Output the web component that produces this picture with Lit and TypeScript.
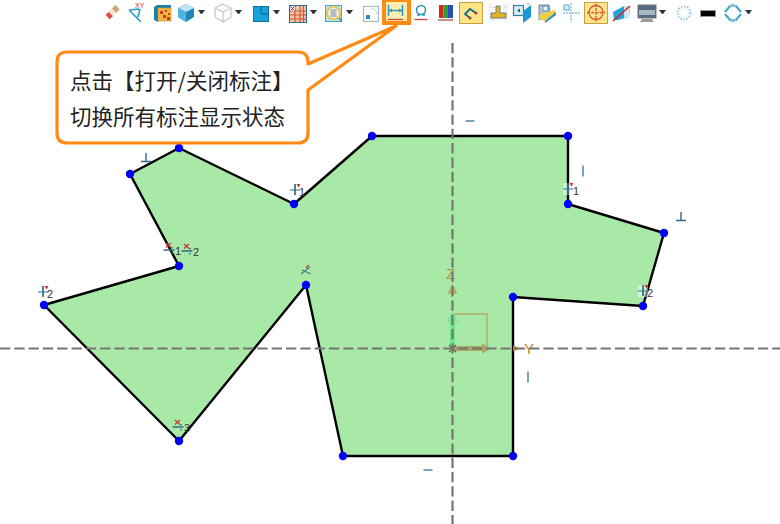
import { LitElement, html, css, svg } from "lit";
import { customElement } from "lit/decorators.js";

type Tool = { ml: number; arrow?: boolean; mode?: "on" | "focus"; icon: unknown };

const tools: Tool[] = [
  { ml: 0, icon: svg`<g transform="rotate(-45 11 11.500)"><rect x="4" y="8" width="4.500" height="6" fill="#dc4f4a"/><rect x="8.500" y="8" width="4.500" height="6" fill="#f6e6c8"/><rect x="13" y="8" width="5" height="6" fill="#c9a77e"/></g>` },
  { ml: 2, icon: svg`<path d="M3 9 15 21M3 9l10-1M14 8l-2 8" fill="none" stroke="#2e9cc8" stroke-width="1.700"/><text x="9" y="7" font-size="7" font-family="Liberation Sans" fill="#c0392b">XY</text>` },
  { ml: 4, icon: svg`<path d="M2 6l3-2h14v3H6v14l-4-2z" fill="#1f7fa8"/><rect x="6" y="7" width="13" height="13" fill="#f4b642" stroke="#c98a3a" stroke-width=".6"/><path d="M8 10h3v3H8zM13 9h2v2h-2zM16 12h2v2h-2zM11 14h3v3h-3zM15 16h3v3h-3z" fill="#d5342b"/>` },
  { ml: 1, arrow: true, icon: svg`<path d="M11 3l8 4v9l-8 5-8-5V7z" fill="#1d88b8"/><path d="M11 3l8 4-8 4-8-4z" fill="#bfe5f3"/><path d="M3 7l8 4v10l-8-5z" fill="#4fb4de"/>` },
  { ml: 7, arrow: true, icon: svg`<path d="M11 3l8 4v9l-8 5-8-5V7zM3 7l8 4 8-4M11 11v10" fill="#fff" stroke="#bcc9d1" stroke-width="1.200"/>` },
  { ml: 8, arrow: true, icon: svg`<rect x="3.500" y="5.500" width="15" height="15" fill="#17a2dc" stroke="#13739c"/><path d="M11 5.500v7.500h7.500" fill="none" stroke="#0c5f85"/>` },
  { ml: 7, arrow: true, icon: svg`<rect x="2.500" y="4.500" width="17" height="17" fill="#f3c4a5" stroke="#2f6f8f"/><path d="M8 5v16M13 5v16M16.500 5v16M3 10h16M3 14h16M3 18h16" stroke="#d2553c" stroke-width="1.200"/><rect x="3" y="5" width="5" height="5" fill="#e9e4ee"/><path d="M3.500 5.500l4 4M7.500 5.500l-4 4" stroke="#c0392b"/>` },
  { ml: 6, arrow: true, icon: svg`<rect x="2.500" y="4.500" width="16" height="16" fill="#bfe3f2" stroke="#4aa5cc"/><circle cx="10.500" cy="12" r="6.500" fill="#eef0ee" stroke="#e0c95a" stroke-width="2.200"/><rect x="7.500" y="8" width="6" height="8" fill="#b6bcc2"/><path d="M16 17l3 3" stroke="#3a7fa0" stroke-width="1.500"/>` },
  { ml: 7, icon: svg`<rect x="3.500" y="5.500" width="15" height="15" fill="#fff" stroke="#aab8c2" stroke-width="1.200"/><path d="M11 8q5-1 6 5" fill="none" stroke="#7cc3e0" stroke-dasharray="1.500 1"/><rect x="6" y="14" width="4" height="4" fill="#2a8fbe"/>` },
  { ml: 3, mode: "focus", icon: svg`<path d="M3.500 4v11M17.500 4v11M4 9.500h13" fill="none" stroke="#2d97bd" stroke-width="1.500"/><path d="M4 9.500l3-2v4zM17 9.500l-3-2v4z" fill="#2d97bd"/><path d="M3 18.500h15" stroke="#c7433c" stroke-width="1.300"/>` },
  { ml: 3, icon: svg`<circle cx="11" cy="9" r="4.500" fill="none" stroke="#2d8fb5" stroke-width="1.500"/><path d="M7 14h3M12 14h3" stroke="#2d8fb5" stroke-width="1.500"/><path d="M4.500 18.500h13" stroke="#c7433c" stroke-width="1.300"/>` },
  { ml: 3, icon: svg`<rect x="4" y="4" width="4.500" height="13" fill="#d9261c"/><rect x="8.500" y="4" width="4.500" height="13" fill="#2aa12f"/><rect x="13" y="4" width="5" height="13" fill="#2a4fb5"/><path d="M3 19h15" stroke="#b56a66" stroke-width="1.500"/>` },
  { ml: 3, mode: "on", icon: svg`<path d="M16 12l-6-4-5 5 5 4" fill="none" stroke="#0f6f8f" stroke-width="1.800"/><circle cx="16" cy="12" r="1.500" fill="#c0392b"/><circle cx="10" cy="17" r="1.500" fill="#c0392b"/>` },
  { ml: 5, icon: svg`<path d="M3 3v18M6 3v18M17 3v18M20 3v18M2 6h18M2 18h18" stroke="#c7c7c7" stroke-dasharray="1 1.500"/><path d="M9 5h4v7h6v5H4v-5h5z" fill="#e6b422" stroke="#3d6c8a" stroke-width=".8"/>` },
  { ml: 2, icon: svg`<rect x="2.500" y="4.500" width="10" height="10" fill="#d9edf6" stroke="#2d7ea6" stroke-width="1.200"/><path d="M6 9.500l3-2v4z" fill="#3a5a72"/><path d="M12 10l8-6v12l-8 6z" fill="#1b9ad2"/><path d="M16 3h3" stroke="#e8b48a" stroke-width="1.500"/>` },
  { ml: 3, icon: svg`<path d="M3 4h10l1 8-11 7z" fill="#b7c4cc" stroke="#55707f" stroke-width=".8"/><rect x="7" y="5" width="5" height="5" fill="#e6f2f8" stroke="#3a86ac" stroke-width=".8"/><path d="M3 14l15-5 2 2-11 9-6-2z" fill="#f0cf3e"/><path d="M9 20l11-9v3l-11 8z" fill="#1f90c4"/>` },
  { ml: 3, icon: svg`<rect x="3" y="4" width="5" height="5" fill="#d9edf6" stroke="#62a9c9"/><path d="M10 2v19M2 12h18" stroke="#8cc3dc" stroke-width="1.400" stroke-dasharray="2 1"/>` },
  { ml: 2, mode: "on", icon: svg`<circle cx="11" cy="11.500" r="7" fill="none" stroke="#d9543f" stroke-width="1.300"/><path d="M11 2.500v18M2 11.500h18" stroke="#d9543f" stroke-width="1.300" stroke-dasharray="3 1.200"/>` },
  { ml: 3, icon: svg`<path d="M3 11l11-6h6l-1 11-11 3H4z" fill="#25a3d6"/><path d="M14 5h6l-1 11-5 1z" fill="#c9ebf6"/><path d="M3 20L20 5" stroke="#e01f26" stroke-width="1.500"/>` },
  { ml: 4, arrow: true, icon: svg`<rect x="2" y="4" width="18" height="13" fill="#556a80" stroke="#777"/><path d="M3 9h16v5H3z" fill="#a9b7c4"/><path d="M6 18h10l2 3H4z" fill="#9a9a9a"/>` },
  { ml: 7, icon: svg`<circle cx="11" cy="12" r="6.500" fill="none" stroke="#79b9d6" stroke-width="1.500" stroke-dasharray="1.500 1.500"/><circle cx="11" cy="12" r="4.500" fill="none" stroke="#b4d9ea" stroke-dasharray="1 2"/>` },
  { ml: 2, icon: svg`<rect x="3.500" y="9.500" width="15" height="6" fill="#000" stroke="#999"/>` },
  { ml: 3, arrow: true, icon: svg`<path d="M8.500 4.500L3 11M13.500 4.500L19 11M3 13l5.500 6.500M19 13l-5.500 6.500" fill="none" stroke="#4aa8cf" stroke-width="2.200"/><path d="M9 3h4v3H9zM9 18h4v3H9z" fill="#7fc4df"/>` },
];

const pts: [number, number][] = [
  [179, 148], [294, 204], [372, 136], [568, 136], [568, 204], [664, 233], [643, 306], [513, 297],
  [513, 456], [343, 456], [306, 285], [179, 441], [44, 305], [179, 266], [130, 174],
];

const perp = (x: number, y: number) =>
  svg`<path d="M${x - 5} ${y + 4.5}h10M${x} ${y - 4}v8" fill="none" stroke="#2f6a88" stroke-width="1.400"/>`;
const hbar = (x: number, y: number) =>
  svg`<path d="M${x - 4.5} ${y}h9" stroke="#6f9ab5" stroke-width="1.800"/>`;
const vbar = (x: number, y: number) =>
  svg`<path d="M${x} ${y - 5.5}v11" stroke="#6f9ab5" stroke-width="1.800"/>`;
const cross = (x: number, y: number, n: string, nx = 7) => svg`
  <rect x="${x - 5}" y="${y - 6}" width="10" height="12" fill="#fff" opacity=".45"/>
  <path d="M${x - 5} ${y}h10" stroke="#5d8ea8" stroke-width="1.300"/>
  <path d="M${x} ${y - 6}v11" stroke="#2f6a88" stroke-width="1.700"/>
  <path d="M${x + 1.5} ${y - 6}h4l-2 3.500z" fill="#c0392b"/>
  <text class="tag" x="${x + nx - 3}" y="${y + 6}">${n}</text>`;
const ratio = (x: number, y: number, n: string) => svg`
  <path d="M${x - 3} ${y - 7}l5 4.500M${x + 2} ${y - 7}l-5 4.500" stroke="#c8362c" stroke-width="1.200"/>
  <path d="M${x - 5.5} ${y}h11" stroke="#2f6a88" stroke-width="1.500"/>
  <path d="M${x + 3} ${y - 3}v1.500M${x + 3} ${y + 2}v1.500" stroke="#2f6a88" stroke-width="1.400"/>
  <text class="tag" x="${x + 6}" y="${y + 5}">${n}</text>`;

@customElement("app-root")
export class AppRoot extends LitElement {
  static styles = css`
    :host {
      display: block;
      position: relative;
      width: 780px;
      height: 524px;
      overflow: hidden;
      background: #fff;
    }
    .toolbar {
      display: flex;
      align-items: flex-start;
      height: 26px;
      padding: 1px 0 0 102px;
      box-sizing: border-box;
    }
    .tool {
      position: relative;
      display: flex;
      align-items: center;
      height: 22px;
    }
    .tool svg {
      position: relative;
      display: block;
      width: 22px;
      height: 22px;
    }
    .caret {
      width: 1px;
      height: 0;
      margin-left: 1px;
      border: 3px solid transparent;
      border-top: 4px solid #333;
      border-bottom: 0;
      box-sizing: content-box;
    }
    .on::before {
      content: "";
      position: absolute;
      left: -1px;
      right: -1px;
      top: 1px;
      bottom: -1px;
      background: #ffe488;
      border: 1px solid #c9a04a;
      box-sizing: border-box;
    }
    .focus::before {
      content: "";
      position: absolute;
      left: -3px;
      right: -4px;
      top: -1px;
      bottom: -2px;
      background: #fdeeb0;
      border: solid #ff8a14;
      border-width: 2px 4px 4px;
      box-sizing: border-box;
    }
    .canvas {
      display: block;
      width: 780px;
      height: 498px;
    }
    .tag {
      font: 11px "Liberation Sans", sans-serif;
      fill: #333;
    }
    .axis-letter {
      font: 15px "Liberation Sans", sans-serif;
    }
    .callout {
      position: absolute;
      left: 57px;
      top: 52px;
      width: 251px;
      height: 91px;
      padding: 10px 0 0 13px;
      box-sizing: border-box;
      font: 21.5px/36px "Noto Sans CJK SC", "Liberation Sans", sans-serif;
      color: #222;
      white-space: nowrap;
    }
    .tail {
      position: absolute;
      left: -57px;
      top: -52px;
      width: 460px;
      height: 200px;
      pointer-events: none;
    }
    .line {
      position: relative;
    }
  `;

  render() {
    return html`
      <div class="toolbar">
        ${tools.map(
          (t) => html`<div class="tool" style="margin-left:${t.ml}px">
            <div class="tool ${t.mode ?? ""}">
              <svg viewBox="0 0 22 22">${t.icon}</svg>
            </div>
            ${t.arrow ? html`<span class="caret"></span>` : ""}
          </div>`
        )}
      </div>
      <svg class="canvas" viewBox="0 26 780 498">
        <polygon points=${pts.map((p) => p.join(",")).join(" ")} fill="#a8e9a8" stroke="#000" stroke-width="2.400" stroke-linejoin="round"/>
        <g fill="none">
          <path d="M453 314h34v34" stroke="#b0a868" stroke-width="1.300"/>
          <path d="M452.500 348V315" stroke="#6fe58a" stroke-width="5"/>
          <path d="M452 348.500H482" stroke="#a7a763" stroke-width="5"/>
          <path d="M449 345l7 7M456 345l-7 7" stroke="#6b6b45" stroke-width="1.300"/>
        </g>
        <path d="M452.500 311l-6 11h12z" fill="#7fe695"/>
        <path d="M452.500 283l-5 11h10z" fill="#b7b06a"/>
        <path d="M491 348.500l-9-5v10z" fill="#a7a763"/>
        <path d="M520 348.500l-7-3v6z" fill="#b8801f"/>
        <text class="axis-letter" x="446" y="279" fill="#a89a50">Z</text>
        <text class="axis-letter" x="524" y="354" fill="#b8862d">Y</text>
        <path d="M0 348.500H780" stroke="#757575" stroke-width="2.200" stroke-dasharray="10.300 4"/>
        <path d="M452.500 43V524" stroke="#757575" stroke-width="2.200" stroke-dasharray="10.300 4"/>

        ${perp(146, 157)} ${perp(681, 216)}
        ${hbar(470, 121)} ${hbar(428, 470)}
        ${vbar(583, 171)} ${vbar(528, 377)}
        ${cross(295, 190, "1")} ${cross(568, 189, "1", 8)} ${cross(43, 292, "2", 7)} ${cross(643, 291, "2", 7)}
        ${ratio(169, 250, "1")} ${ratio(187, 251, "2")} ${ratio(178, 427, "3")}
        <path d="M301 274l9-7M302 270l9 4" fill="none" stroke="#4a7c93" stroke-width="1.300"/>
        <path d="M306 268l3-3" stroke="#c0392b" stroke-width="1.300"/>

        ${pts.map((p) => svg`<circle cx=${p[0]} cy=${p[1]} r="4.200" fill="#0000f5"/>`)}
      </svg>
      <div class="callout">
        <svg class="tail" viewBox="0 0 460 200">
          <path
            d="M67 52H298Q308 52 308 62V64L396 26 308 90V133Q308 143 298 143H67Q57 143 57 133V62Q57 52 67 52Z"
            fill="#fff"
            stroke="#ff8a14"
            stroke-width="3.200"
            stroke-linejoin="round"
          />
        </svg>
        <div class="line">点击【打开/关闭标注】</div>
        <div class="line">切换所有标注显示状态</div>
      </div>
    `;
  }
}
